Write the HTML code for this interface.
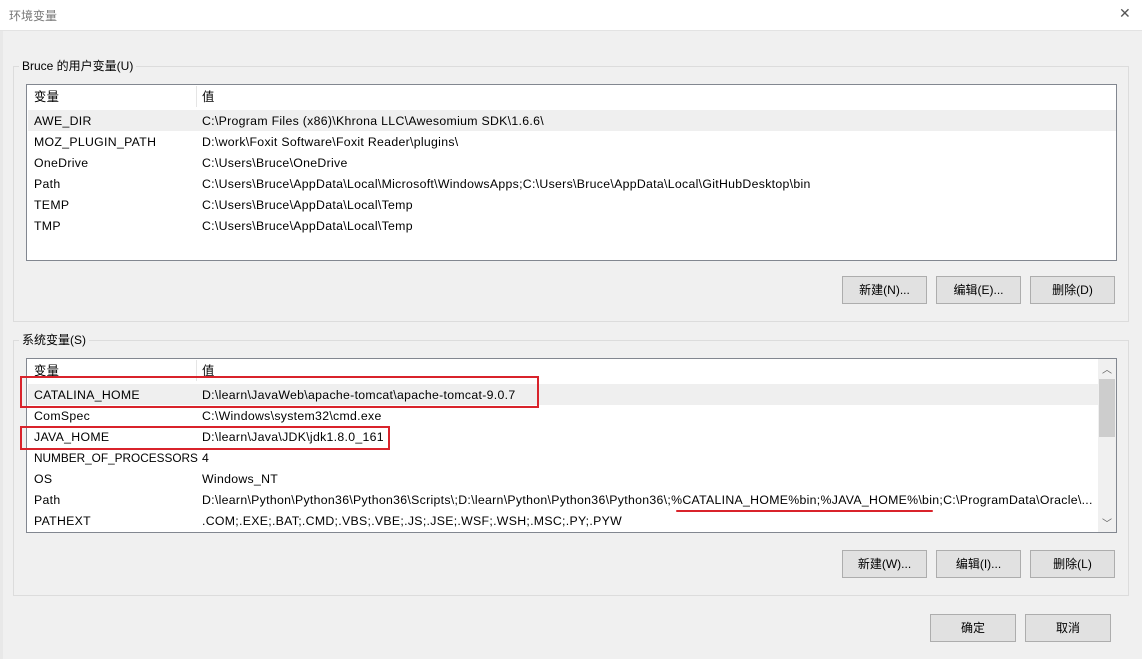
<!DOCTYPE html><html><head><meta charset="utf-8"><style>
*{box-sizing:border-box;margin:0;padding:0}
body{width:1142px;height:659px;background:#f0f0f0;font-family:"Liberation Sans","Noto Sans CJK SC",sans-serif;font-size:12px;color:#000;position:relative;overflow:hidden}
.a{position:absolute}
.title{left:0;top:0;width:1142px;height:31px;background:#fff;border-bottom:1px solid #e3e3e3}
.grp{border:1px solid #dcdcdc}
.lbl{background:#f0f0f0;padding:0 3px;line-height:16px}
.list{background:#fff;border:1px solid #828790;overflow:hidden}
.row{position:absolute;left:1px;height:21px;line-height:22px;white-space:nowrap;font-size:12.3px;letter-spacing:0.3px}
.row span{position:absolute;top:0}
.c1{left:6px}.c2{left:174px}
.btn{background:#e1e1e1;border:1px solid #adadad;text-align:center;line-height:26px;height:28px}
.red{border:2px solid #d9232b}
</style></head><body>
<div class="a title"></div>
<div class="a" style="left:9px;top:7px;color:#777;font-size:12px">环境变量</div>
<div class="a" style="left:1119px;top:5px;color:#555;font-size:14px;font-weight:300">✕</div>
<div class="a" style="left:0;top:31px;width:3px;height:628px;background:#e8e8e8"></div>

<div class="a grp" style="left:13px;top:66px;width:1116px;height:256px"></div>
<div class="a lbl" style="left:19px;top:58px">Bruce 的用户变量(U)</div>
<div class="a list" style="left:26px;top:84px;width:1091px;height:177px">
<div class="row" style="top:1px;width:1089px"><span class="c1">变量</span><span class="c2">值</span><span style="left:168px;top:0;width:1px;height:21px;background:#e5e5e5"></span></div>
<div class="row" style="top:25px;width:1089px;background:#efefef"><span class="c1">AWE_DIR</span><span class="c2">C:\Program Files (x86)\Khrona LLC\Awesomium SDK\1.6.6\</span></div>
<div class="row" style="top:46px"><span class="c1">MOZ_PLUGIN_PATH</span><span class="c2">D:\work\Foxit Software\Foxit Reader\plugins\</span></div>
<div class="row" style="top:67px"><span class="c1">OneDrive</span><span class="c2">C:\Users\Bruce\OneDrive</span></div>
<div class="row" style="top:88px"><span class="c1">Path</span><span class="c2">C:\Users\Bruce\AppData\Local\Microsoft\WindowsApps;C:\Users\Bruce\AppData\Local\GitHubDesktop\bin</span></div>
<div class="row" style="top:109px"><span class="c1">TEMP</span><span class="c2">C:\Users\Bruce\AppData\Local\Temp</span></div>
<div class="row" style="top:130px"><span class="c1">TMP</span><span class="c2">C:\Users\Bruce\AppData\Local\Temp</span></div>
</div>
<div class="a btn" style="left:842px;top:276px;width:85px">新建(N)...</div>
<div class="a btn" style="left:936px;top:276px;width:85px">编辑(E)...</div>
<div class="a btn" style="left:1030px;top:276px;width:85px">删除(D)</div>

<div class="a grp" style="left:13px;top:340px;width:1116px;height:256px"></div>
<div class="a lbl" style="left:19px;top:332px">系统变量(S)</div>
<div class="a list" style="left:26px;top:358px;width:1091px;height:175px">
<div class="row" style="top:1px;width:1070px"><span class="c1">变量</span><span class="c2">值</span><span style="left:168px;top:0;width:1px;height:21px;background:#e5e5e5"></span></div>
<div class="row" style="top:25px;width:1070px;background:#efefef"><span class="c1">CATALINA_HOME</span><span class="c2">D:\learn\JavaWeb\apache-tomcat\apache-tomcat-9.0.7</span></div>
<div class="row" style="top:46px"><span class="c1">ComSpec</span><span class="c2">C:\Windows\system32\cmd.exe</span></div>
<div class="row" style="top:67px"><span class="c1">JAVA_HOME</span><span class="c2">D:\learn\Java\JDK\jdk1.8.0_161</span></div>
<div class="row" style="top:88px"><span class="c1" style="letter-spacing:0;font-size:11.8px">NUMBER_OF_PROCESSORS</span><span class="c2">4</span></div>
<div class="row" style="top:109px"><span class="c1">OS</span><span class="c2">Windows_NT</span></div>
<div class="row" style="top:130px"><span class="c1">Path</span><span class="c2">D:\learn\Python\Python36\Python36\Scripts\;D:\learn\Python\Python36\Python36\;%CATALINA_HOME%bin;%JAVA_HOME%\bin;C:\ProgramData\Oracle\...</span></div>
<div class="row" style="top:151px"><span class="c1">PATHEXT</span><span class="c2">.COM;.EXE;.BAT;.CMD;.VBS;.VBE;.JS;.JSE;.WSF;.WSH;.MSC;.PY;.PYW</span></div>
<div class="a" style="left:1071px;top:0;width:18px;height:173px;background:#f0f0f0"></div>
<div class="a" style="left:1072px;top:20px;width:16px;height:58px;background:#cdcdcd"></div>
<div class="a" style="left:1075px;top:2px;color:#606060;font-size:10px">︿</div>
<div class="a" style="left:1075px;top:156px;color:#606060;font-size:10px">﹀</div>
</div>
<div class="a red" style="left:20px;top:376px;width:519px;height:32px"></div>
<div class="a red" style="left:20px;top:426px;width:370px;height:24px"></div>
<div class="a" style="left:676px;top:510px;width:257px;height:2px;background:#d9232b;border-radius:1px"></div>
<div class="a btn" style="left:842px;top:550px;width:85px">新建(W)...</div>
<div class="a btn" style="left:936px;top:550px;width:85px">编辑(I)...</div>
<div class="a btn" style="left:1030px;top:550px;width:85px">删除(L)</div>

<div class="a btn" style="left:930px;top:614px;width:86px">确定</div>
<div class="a btn" style="left:1025px;top:614px;width:86px">取消</div>
</body></html>
